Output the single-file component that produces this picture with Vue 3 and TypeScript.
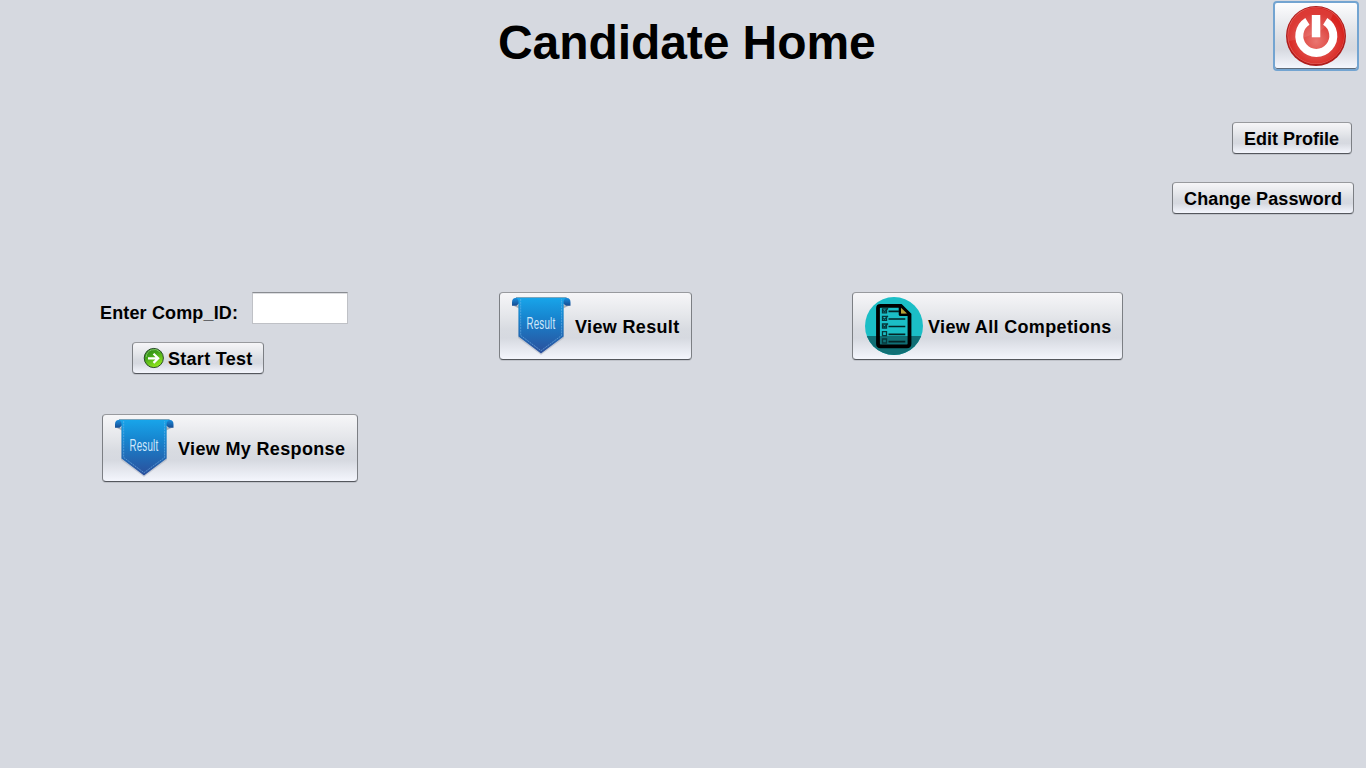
<script setup lang="ts">
import { ref } from 'vue'

const compId = ref<string>('')
</script>

<template>
  <main class="screen">
    <svg class="defs" width="0" height="0" aria-hidden="true">
      <defs>
        <linearGradient id="ribbon" x1="0" y1="0" x2="0" y2="1">
          <stop offset="0" stop-color="#18a5ea" />
          <stop offset=".35" stop-color="#1786d0" />
          <stop offset="1" stop-color="#2b4f9b" />
        </linearGradient>
        <linearGradient id="curl" x1="0" y1="0" x2="0" y2="1">
          <stop offset="0" stop-color="#1b8cdc" />
          <stop offset="1" stop-color="#164b90" />
        </linearGradient>
        <symbol id="result-icon" viewBox="0 0 60 60">
          <path d="M7 4v38l23 17 23-17V4z" fill="#8f99aa" opacity=".35" />
          <path d="M2 9.500h5l1-1v4zM58.500 9.500H54l-2-1v4z" fill="#6b7480" opacity=".5" />
          <path d="M1 9.800V6.500Q1 2 4.500 2H8v5.500L5.500 9.800zM59.500 9.800V6.500Q59.500 2 56 2H52v5.500L55 9.800z" fill="url(#curl)" />
          <path d="M4.500 1.500h51.500Q52.600 3 52.600 6v34.500L30 57.500 7.500 40.500V6Q7.500 3 4.500 1.500z" fill="url(#ribbon)" />
          <path d="M9.700 3v36.500L30 54.700l20.600-15.200V3" fill="none" stroke="#79b9e9" stroke-width=".7" stroke-dasharray="2 .8" opacity=".8" />
          <path d="M5 1.500h50.500" stroke="#718b9b" stroke-width=".6" />
          <text x="15.400" y="32.500" textLength="29" lengthAdjust="spacingAndGlyphs" font-family="Liberation Sans, sans-serif" font-size="17" font-weight="400" fill="#cfe8fb">Result</text>
        </symbol>
      </defs>
    </svg>

    <header class="top">
      <h1>Candidate Home</h1>
      <button class="btn power" aria-label="Log out">
        <svg width="62" height="62" viewBox="0 0 62 62">
          <defs>
            <radialGradient id="red" cx=".5" cy=".6" r=".5">
              <stop offset="0" stop-color="#ea7670" />
              <stop offset=".5" stop-color="#df4d48" />
              <stop offset="1" stop-color="#d9241f" />
            </radialGradient>
          </defs>
          <circle cx="31" cy="31" r="30" fill="#b01c1b" />
          <circle cx="31" cy="30.500" r="28.600" fill="#e3605b" />
          <circle cx="31.200" cy="30.600" r="28" fill="url(#red)" />
          <path d="M4 36A27.500 27.500 0 0 1 48 9Q44 23 30 28 18 34 4 36z" fill="#fff" opacity=".1" />
          <path d="M22.400 16.400a17 17 0 1 0 17.800 0" fill="none" stroke="#fff" stroke-width="8" />
          <path d="M26.800 10h8.500v22.300h-8.500z" fill="#fff" />
        </svg>
      </button>
    </header>

    <nav class="account">
      <button class="btn edit"><span>Edit Profile</span></button>
      <button class="btn change"><span>Change Password</span></button>
    </nav>

    <section class="actions">
      <div class="test">
        <div class="entry">
          <label for="comp">Enter Comp_ID:</label>
          <input id="comp" v-model="compId" type="text" />
        </div>
        <button class="btn start">
          <svg width="22" height="22" viewBox="0 0 22 22">
            <defs>
              <linearGradient id="green" x1="0" y1="0" x2=".5" y2="1">
                <stop offset="0" stop-color="#267e16" />
                <stop offset=".45" stop-color="#43a51a" />
                <stop offset="1" stop-color="#8fe51b" />
              </linearGradient>
            </defs>
            <circle cx="10.800" cy="11" r="9.600" fill="url(#green)" stroke="#2a4c29" stroke-width="1" />
            <path d="M3.200 10A8 8 0 0 1 17 5" fill="none" stroke="#7cc363" stroke-width="1" />
            <path d="M5 11.300h10M10.500 6.700l4.700 4.600-4.700 4.600" fill="none" stroke="#fff" stroke-width="2.200" />
          </svg>
          <span>Start Test</span>
        </button>
        <button class="btn large response">
          <svg width="60" height="60"><use href="#result-icon" /></svg>
          <span>View My Response</span>
        </button>
      </div>

      <button class="btn large result">
        <svg width="60" height="60"><use href="#result-icon" /></svg>
        <span>View Result</span>
      </button>

      <button class="btn large all">
        <svg width="60" height="60" viewBox="0 0 60 60">
          <defs>
            <clipPath id="disc"><circle cx="30" cy="30" r="29" /></clipPath>
          </defs>
          <g clip-path="url(#disc)">
            <path d="M0 0h60v60H0z" fill="#1bbec6" />
            <path d="M0 40h60v20H0z" fill="#106f75" />
          </g>
          <path d="M16.500 9.800h20.300l8.700 8.700v29.300q0 2.500-2.500 2.500H16.500q-2.500 0-2.500-2.500V12.300q0-2.500 2.500-2.500z" fill="none" stroke="#000" stroke-width="3.800" />
          <path d="M36 10v8.600h9z" fill="#b6a238" stroke="#000" stroke-width="2.600" stroke-linejoin="round" />
          <path d="M37 11.800v5.600h6z" fill="#b6a238" />
          <g fill="none" stroke="#07383b" stroke-width="1.300">
            <path d="M18.500 12.800h4v4h-4zM18.500 20.400h4v4h-4zM18.500 28h4v4h-4zM18.500 35.600h4v4h-4zM18.500 43h4v4h-4z" />
            <path d="M19 14.300l1.500 1.500 3.500-3.500M19 21.900l1.500 1.500 3.500-3.500M19 29.500l1.500 1.500 3.500-3.500" />
          </g>
          <path d="M24.500 15.400H35M24.500 23h16.800M24.500 30.500h16.800M24.500 38.300h16.800M24.500 45.700h16.800" stroke="#042527" stroke-width="1.700" />
        </svg>
        <span>View All Competions</span>
      </button>
    </section>
  </main>
</template>

<style>
body {
  margin: 0;
  background: #d6d9e0;
}
</style>

<style scoped>
.screen {
  width: 1366px;
  height: 768px;
  overflow: hidden;
  background: #d6d9e0;
  color: #000;
  font: bold 18px/20px "Liberation Sans", Arial, sans-serif;
}
.defs {
  display: block;
}
.top {
  display: flex;
  justify-content: flex-end;
  height: 122px;
  padding: 1px 7px 0 0;
  box-sizing: border-box;
}
h1 {
  width: 775px;
  margin: 14px 0 0;
  font-size: 48px;
  line-height: 56px;
  letter-spacing: -0.08px;
  white-space: nowrap;
}
.btn {
  display: flex;
  align-items: center;
  justify-content: flex-start;
  box-sizing: border-box;
  height: 32px;
  margin: 0;
  padding: 0 0 0 11px;
  border: 1px solid #85888d;
  border-color: #989a9e #7c7f84 #54575d;
  border-radius: 4px;
  background: linear-gradient(#f6f6f8 0%, #e4e6ea 35%, #d8dbe1 55%, #d6d9e0 68%, #f4f6fd 100%);
  box-shadow: 0 1px 0 #c0c3ca;
  color: #000;
  font: inherit;
  white-space: nowrap;
}
.btn svg {
  flex: none;
}
.power {
  width: 86px;
  height: 70px;
  padding-left: 10px;
  border: 2px solid #73a4d1;
  background: linear-gradient(#fdfdfe 0%, #e6e8ec 35%, #d8dbe1 60%, #d6d9e0 70%, #f6f8ff 100%);
  box-shadow: inset 0 -1px 0 #5f6b7a;
}
.account {
  display: flex;
  flex-direction: column;
  align-items: flex-end;
  gap: 28px;
  padding-right: 12px;
}
.edit {
  width: 120px;
  margin-right: 2px;
}
.change {
  width: 182px;
}
.btn span {
  padding-top: 1px;
}
.change span {
  letter-spacing: 0.14px;
}
.actions {
  display: flex;
  align-items: flex-start;
  padding: 78px 0 0 100px;
}
.test {
  width: 399px;
}
.entry {
  display: flex;
  align-items: flex-start;
}
label {
  width: 152px;
  padding-top: 11px;
  letter-spacing: 0.15px;
}
input {
  box-sizing: border-box;
  width: 96px;
  height: 32px;
  padding: 4px;
  border: 1px solid #bfc1c6;
  border-top-color: #898c91;
  background: #fff;
  box-shadow: inset 0 1px 0 #dcdde0;
  font: inherit;
}
.start {
  width: 132px;
  gap: 3px;
  margin: 18px 0 0 32px;
  padding-left: 10px;
  letter-spacing: 0.28px;
}
.large {
  height: 68px;
  gap: 4px;
  letter-spacing: 0.35px;
}
.response {
  width: 256px;
  margin: 40px 0 0 2px;
}
.result {
  width: 193px;
}
.all {
  width: 271px;
  margin-left: 160px;
}
</style>
